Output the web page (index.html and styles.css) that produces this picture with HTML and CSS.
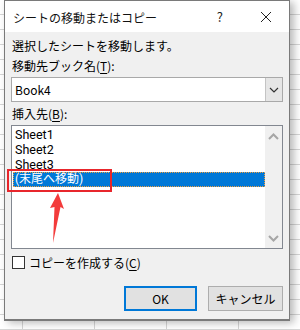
FILE: index.html
```html
<!DOCTYPE html>
<html lang="ja">
<head>
<meta charset="utf-8">
<link rel="stylesheet" href="styles.css">
</head>
<body>
<div class="dialog">
  <div class="titlebar">
    <span class="title">シートの移動またはコピー</span>
    <span class="help">?</span>
    <svg class="close" width="12" height="12" viewBox="0 0 12 12"><path d="M1 1 L11 11 M11 1 L1 11" stroke="#222" stroke-width="1" fill="none"/></svg>
  </div>
  <div class="content">
    <div class="text t1">選択したシートを移動します。</div>
    <div class="text t2">移動先ブック名(<u>T</u>):</div>
    <div class="combo">
      <span class="combo-value">Book4</span>
      <span class="combo-btn"><svg width="10" height="6" viewBox="0 0 10 6"><path d="M1 1 L5 5 L9 1" stroke="#333" stroke-width="1.2" fill="none"/></svg></span>
    </div>
    <div class="text t3">挿入先(<u>B</u>):</div>
    <div class="listbox">
      <ul class="items">
        <li>Sheet1</li>
        <li>Sheet2</li>
        <li>Sheet3</li>
        <li class="selected">(末尾へ移動)</li>
      </ul>
      <div class="scrollbar">
        <svg width="11" height="7" viewBox="0 0 11 7"><path d="M1 6 L5.5 1.5 L10 6" stroke="#a6a6a6" stroke-width="2" fill="none"/></svg>
        <svg width="11" height="7" viewBox="0 0 11 7"><path d="M1 1 L5.5 5.5 L10 1" stroke="#a6a6a6" stroke-width="2" fill="none"/></svg>
      </div>
      <div class="redbox"></div>
      <svg class="arrow" width="20" height="52" viewBox="0 0 20 52"><polygon points="10,0 16,16 12.5,14 5,50 6.5,14 2,15" fill="#f33b3b"/></svg>
    </div>
    <label class="check"><span class="box"></span><span>コピーを作成する(<u>C</u>)</span></label>
    <div class="buttons">
      <button class="btn ok">OK</button>
      <button class="btn cancel">キャンセル</button>
    </div>
  </div>
</div>
</body>
</html>
```
FILE: styles.css
```css
* { box-sizing: border-box; }
html, body { margin: 0; padding: 0; }
body {
  width: 300px;
  height: 330px;
  overflow: hidden;
  padding-left: 4px;
  font-family: "Noto Sans CJK JP", "Noto Sans", sans-serif;
  font-size: 12px;
  color: #000;
  background-color: #fff;
  background-image:
    repeating-linear-gradient(to bottom, transparent 0 14px, #d6d6d6 14px 15px),
    repeating-linear-gradient(to right, transparent 0 22px, #d6d6d6 22px 23px, transparent 23px 72px);
}
.dialog {
  width: 286px;
  height: 321px;
  border: 1px solid #7a7a7a;
  border-bottom-width: 2px;
  background: #f0f0f0;
  display: flex;
  flex-direction: column;
  box-shadow: 4px 2px 8px rgba(0,0,0,0.28);
}
.titlebar {
  height: 31px;
  background: #fff;
  display: flex;
  align-items: center;
  padding-left: 8px;
  flex: none;
}
.title { font-size: 12px; flex: 1; margin-top: 1px; color: #111; }
.help { font-size: 13px; margin-right: 37px; color: #222; }
.close { margin-right: 17px; }
.content {
  padding: 6px 6px 0 6px;
  display: flex;
  flex-direction: column;
}
.text { line-height: 16px; height: 16px; padding-left: 1px; }
.t2 { margin-top: 4px; }
u { text-decoration-thickness: 1px; text-underline-offset: 2px; }
.combo {
  margin-top: 3px;
  height: 25px;
  border: 1px solid #a9a9a9;
  background: #fff;
  display: flex;
  align-items: stretch;
}
.combo-value { flex: 1; padding-left: 3px; line-height: 23px; }
.combo-btn {
  width: 17px;
  background: #e6e6e6;
  border-left: 1px solid #c4c4c4;
  display: flex;
  align-items: center;
  justify-content: center;
}
.t3 { margin-top: 4px; }
.listbox {
  position: relative;
  margin-top: 3px;
  height: 124px;
  border: 1px solid #828790;
  background: #fff;
  display: flex;
  padding: 1px 0 1px 1px;
}
.items {
  list-style: none;
  margin: 0;
  padding: 0;
  flex: 1;
  font-family: Roboto, "Noto Sans CJK JP", sans-serif;
  font-size: 12.5px;
}
.items li {
  height: 15px;
  line-height: 15px;
  padding-left: 2px;
}
.items li.selected {
  background: #0078d7;
  color: #fff;
  outline: 1px dotted #f0a040;
  outline-offset: -1px;
  font-size: 12px;
}
.scrollbar {
  width: 17px;
  background: #f0f0f0;
  display: flex;
  flex-direction: column;
  justify-content: space-between;
  align-items: center;
  padding: 7px 0 6px;
  margin-top: -1px;
  margin-bottom: -1px;
}
.redbox {
  position: absolute;
  left: -5px;
  top: 43px;
  width: 105px;
  height: 23px;
  border: 2px solid #e8262c;
}
.arrow {
  position: absolute;
  left: 36px;
  top: 67px;
}
.check {
  margin-top: 5px;
  height: 16px;
  display: flex;
  align-items: center;
  gap: 4px;
  padding-left: 1px;
}
.box {
  width: 13px;
  height: 13px;
  border: 1px solid #333;
  background: #fff;
}
.buttons {
  margin-top: 16px;
  display: flex;
  justify-content: flex-end;
  gap: 11px;
}
.btn {
  font-family: "Noto Sans CJK JP", "Noto Sans", sans-serif;
  font-size: 12px;
  height: 25px;
  background: #e1e1e1;
  border: 1px solid #adadad;
  padding: 0;
  color: #000;
}
.ok { width: 73px; border: 2px solid #0078d7; }
.cancel { width: 75px; }
```
